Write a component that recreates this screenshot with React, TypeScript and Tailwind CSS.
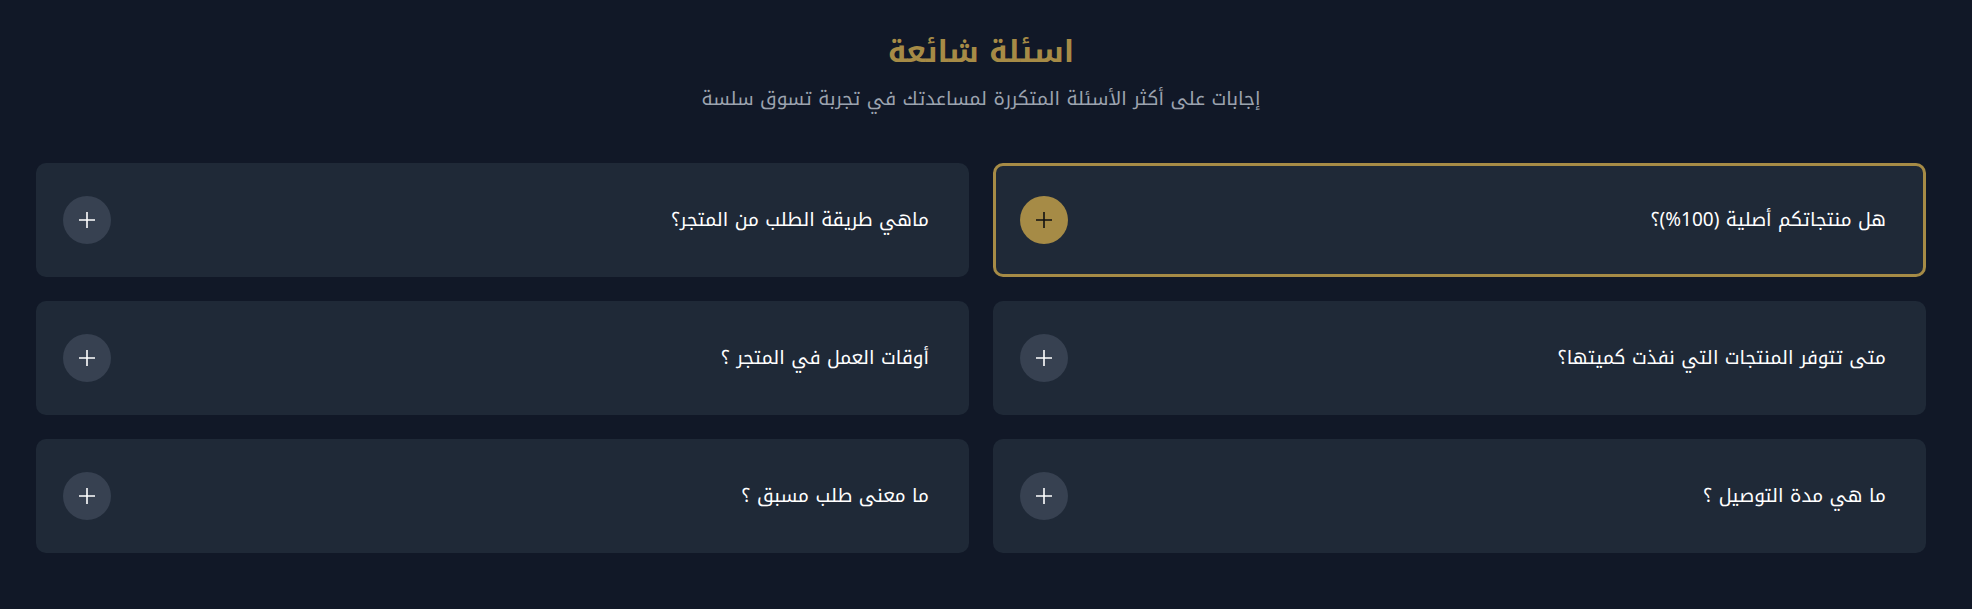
import React from "react";

const faqs = [
  { q: "هل منتجاتكم أصلية (100%)؟", active: true },
  { q: "ماهي طريقة الطلب من المتجر؟" },
  { q: "متى تتوفر المنتجات التي نفذت كميتها؟" },
  { q: "أوقات العمل في المتجر ؟" },
  { q: "ما هي مدة التوصيل ؟" },
  { q: "ما معنى طلب مسبق ؟" },
];

function Plus({ dark }: { dark?: boolean }) {
  return (
    <svg width="18" height="18" viewBox="0 0 18 18" fill="none">
      <path d="M9 1v16M1 9h16" stroke={dark ? "#111111" : "#ffffff"} strokeWidth="1.6" />
    </svg>
  );
}

export default function App() {
  return (
    <div
      dir="rtl"
      className="bg-[#111827] min-h-screen w-full pl-9 pr-[46px] pt-[30px] pb-12"
      style={{ fontFamily: "'Noto Kufi Arabic', 'Noto Sans Arabic', sans-serif" }}
    >
      <div className="flex flex-col items-center">
        <h2 className="text-[30px] leading-[44px] font-bold text-[#a68b46]">اسئلة شائعة</h2>
        <p className="mt-[10px] text-[19px] leading-[30px] text-[#9ca3af]">
          إجابات على أكثر الأسئلة المتكررة لمساعدتك في تجربة تسوق سلسة
        </p>
      </div>
      <div className="mt-[49px] grid grid-cols-2 gap-6">
        {faqs.map((f) => (
          <div
            key={f.q}
            className={`h-[114px] rounded-[10px] bg-[#1f2937] border-[3px] flex items-center justify-between pr-[37px] pl-6 ${
              f.active ? "border-[#a68b46]" : "border-transparent"
            }`}
          >
            <span className="text-[19px] leading-[28px] text-white">{f.q}</span>
            <span
              className={`w-12 h-12 rounded-full flex items-center justify-center ${
                f.active ? "bg-[#a68b46]" : "bg-[#374151]"
              }`}
            >
              <Plus dark={f.active} />
            </span>
          </div>
        ))}
      </div>
    </div>
  );
}
